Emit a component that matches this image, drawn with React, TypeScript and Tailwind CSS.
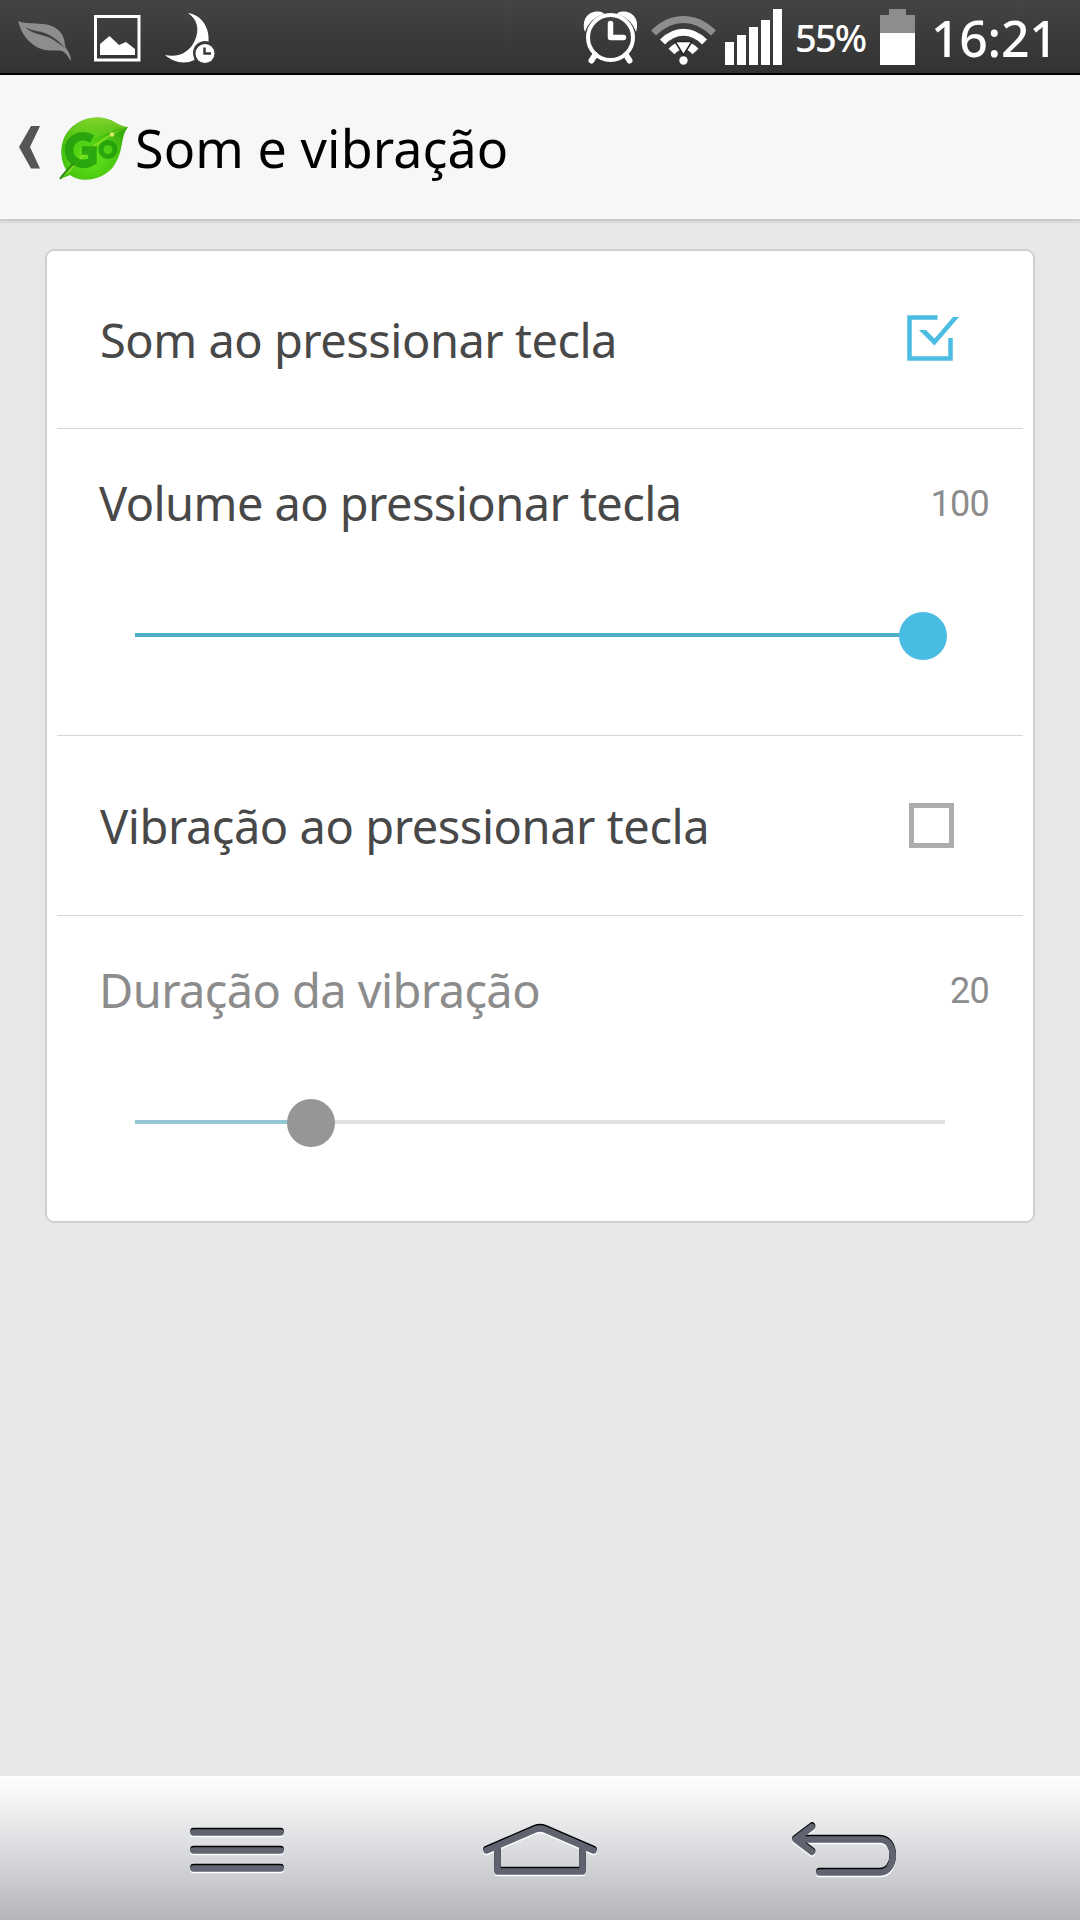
import type { ReactNode } from "react";

interface IRowProps {
  label: string;
  labelClass: string;
  children: ReactNode;
}

interface ISliderRowProps {
  label: string;
  labelClass: string;
  value: string;
  fill: number;
  fillClass: string;
  thumbClass: string;
}

function StatusBar() {
  return (
    <header className="flex h-[75px] w-full items-start border-b-2 border-black bg-linear-to-b from-[#444444] to-[#323232] text-white">
      <svg className="h-[73px] w-[240px] shrink-0" viewBox="0 0 240 73">
        <path
          d="M18 21C28 26 51 19 61 33C66 40 64 45 66 48C69 52 71 56 71 61C69 59 67 53 62 51C54 49 43 54 30 42C22 35 20 27 18 21Z"
          fill="#8d8d8d"
        />
        <path
          d="M25 27C34 32 41 30 51 36C58 40 61 44 65 48C59 44 55 40 48 37C40 34 32 34 25 27Z"
          fill="#3f3f3f"
        />
        <rect x="95.500" y="16.500" width="43.500" height="43.500" fill="none" stroke="#fff" strokeWidth="3" />
        <path d="M100 55V44L109.500 36L119 45L126 42L135 49V55Z" fill="#fff" />
        <path
          d="M188 13C202 15 210 28 208.500 43C202 43 194 49 194.500 60C184 65 173 62 165 55C179 58 190 52 195 40C200 29 197 19 188 13Z"
          fill="#fff"
        />
        <circle cx="205" cy="53" r="12" fill="#3a3a3a" />
        <circle cx="205" cy="53.500" r="9.500" fill="#fff" />
        <path d="M204.500 47.500V53.500H211" fill="none" stroke="#3a3a3a" strokeWidth="2.500" />
      </svg>
      <svg className="ml-[340px] h-[73px] w-[210px] shrink-0" viewBox="580 0 210 73">
        <path d="M585 32C581 20 588 11 598 11.500C602 11.500 604 13 604 14C594 17 588 23 585 32Z" fill="#fff" />
        <path d="M636 32C640 20 633 11 623 11.500C619 11.500 617 13 617 14C627 17 633 23 636 32Z" fill="#fff" />
        <path d="M595 55L591.500 60.500M626 55L629.500 60.500" stroke="#fff" strokeWidth="6" strokeLinecap="round" />
        <circle cx="610.500" cy="37.500" r="22.500" fill="none" stroke="#fff" strokeWidth="4" />
        <path
          d="M610.500 23.500V37.500H623.500"
          fill="none"
          stroke="#fff"
          strokeWidth="5.500"
          strokeLinecap="round"
          strokeLinejoin="round"
        />
        <path d="M653.500 33C672 15 695 15 713.500 33" fill="none" stroke="#8d8d8d" strokeWidth="7" />
        <path d="M662.500 42C675 29 692 29 704.500 42" fill="none" stroke="#fff" strokeWidth="7" />
        <path d="M671.500 51.500C679 43 688 43 695.500 51.500" fill="none" stroke="#fff" strokeWidth="8" />
        <path d="M675 41.500H692L683.500 55Z" fill="#fff" stroke="#222" strokeWidth="1.500" />
        <circle cx="683.500" cy="60.500" r="4.200" fill="#fff" />
        <path d="M725 42h9v23h-9zM737 35h9v30h-9zM749 27h9v38h-9zM761 20h9v45h-9zM773 9h9v56h-9z" fill="#fff" />
      </svg>
      <span className="ml-[5px] mt-[12px] w-[85px] whitespace-nowrap font-['Noto_Sans'] text-[38px] font-medium leading-[50px] tracking-[-1.800px]">
        55%
      </span>
      <svg className="h-[73px] w-[35px] shrink-0" viewBox="880 0 35 73">
        <path d="M880 15h9V9h17v6h9v18h-35z" fill="#8d8d8d" />
        <path d="M880 33h35v32h-35z" fill="#fff" />
      </svg>
      <span className="ml-[16px] mt-[8px] whitespace-nowrap font-['Noto_Sans'] text-[50px] font-medium leading-[60px] tracking-[-0.300px]">
        16:21
      </span>
    </header>
  );
}

function TitleBar() {
  return (
    <div className="relative z-10 flex h-[144px] items-start bg-[#f7f7f7] shadow-[0_1px_4px_1px_rgba(0,0,0,0.18)]">
      <svg className="h-[144px] w-[135px] shrink-0" viewBox="0 75 135 144">
        <defs>
          <radialGradient id="leaf" cx="0.45" cy="0.65" r="0.6">
            <stop offset="0" stopColor="#62e61b" />
            <stop offset="0.6" stopColor="#4cc911" />
            <stop offset="1" stopColor="#39ab0d" />
          </radialGradient>
          <linearGradient id="shine" x1="0" y1="0" x2="0" y2="1">
            <stop offset="0" stopColor="#a5e93a" stopOpacity="0.7" />
            <stop offset="1" stopColor="#7ede20" stopOpacity="0.1" />
          </linearGradient>
        </defs>
        <path d="M31 126H40L30 147L40 168.500H31L19 147Z" fill="#555" />
        <path
          d="M60 179C61 177 64 174 67 171C59 160 59 140 70 129C82 116 103 114 116 123C120 125 124 127 128 127C120 137 124 150 115 164C106 180 81 184 70 175C67 176 63 178 60 179Z"
          fill="url(#leaf)"
        />
        <path d="M63 144C67 124 90 112 110 120C117 123 122 127 128 127C103 132 83 147 63 144Z" fill="url(#shine)" />
        <path d="M60 179C80 155 99 136 128 127C105 137 85 154 70 172Z" fill="#98e525" opacity="0.6" />
        <path
          d="M92 139C82 133 69 138 69 150C69 163 84 167 92.500 161V150.500H82"
          fill="none"
          stroke="#1f9a0c"
          strokeWidth="8.500"
          opacity="0.8"
        />
        <circle cx="108" cy="149.500" r="7" fill="none" stroke="#1f9a0c" strokeWidth="5" opacity="0.8" />
        <path d="M60 179C64 173 69 168 74 163" fill="none" stroke="#2f8f14" strokeWidth="2" />
        <circle cx="112" cy="134.500" r="2.300" fill="#d9e86a" />
      </svg>
      <h1 className="mt-[38px] whitespace-nowrap font-['Noto_Sans'] text-[52px] leading-[70px] tracking-[0.100px] text-black">
        Som e vibração
      </h1>
    </div>
  );
}

function CheckRow({ label, labelClass, children }: IRowProps) {
  return (
    <div className="flex h-full items-start justify-between pl-[53px]">
      <span className={`whitespace-nowrap font-['Noto_Sans'] text-[47px] leading-[64px] ${labelClass}`}>{label}</span>
      {children}
    </div>
  );
}

function SliderRow({ label, labelClass, value, fill, fillClass, thumbClass }: ISliderRowProps) {
  return (
    <div className="h-full pl-[52px] pr-[44px]">
      <div className="flex h-[107px] items-start justify-between">
        <span className={`mt-[42px] whitespace-nowrap font-['Noto_Sans'] text-[47px] leading-[64px] ${labelClass}`}>
          {label}
        </span>
        <span className="mt-[54px] font-['Roboto'] text-[36px] leading-[42px] tracking-[-0.700px] text-[#8c8c8c]">
          {value}
        </span>
      </div>
      <div className="relative ml-[36px] mt-[97px] h-[4px] w-[810px] bg-[#e0e0e0]">
        <div className={`h-full ${fillClass}`} style={{ width: fill }} />
        <div
          className={`absolute top-[-21px] size-[48px] -translate-x-1/2 rounded-full ${thumbClass}`}
          style={{ left: fill }}
        />
      </div>
    </div>
  );
}

function Divider() {
  return <div className="mx-[10px] h-px bg-[#d6d6d6]" />;
}

// Engraved stroke: light lip below, dark edge on top
function NavGlyph({ d }: { d: string }) {
  return (
    <g fill="none" strokeLinecap="round" strokeLinejoin="round">
      <path d={d} stroke="#fff" strokeWidth="6.500" transform="translate(0 2.500)" />
      <path d={d} stroke="#000" strokeWidth="6.500" transform="translate(0 -0.500)" />
      <path d={d} stroke="#606470" strokeWidth="6.500" transform="translate(0 0.900)" />
    </g>
  );
}

function NavBar() {
  return (
    <nav className="flex h-[144px] items-center justify-between bg-linear-to-b from-white via-[#dcdde0] to-[#b4b6bb] px-[180px]">
      <svg className="h-[144px] w-[114px]" viewBox="180 1776 114 144">
        <NavGlyph d="M193.500 1831.500H280.500M193.500 1849.500H280.500M193.500 1867.500H280.500" />
      </svg>
      <svg className="h-[144px] w-[130px]" viewBox="475 1776 130 144">
        <NavGlyph d="M497.500 1850V1870.500H582.500V1850M486.500 1849.500L535 1828.500Q540 1826.500 545 1828.500L593.500 1849.500" />
      </svg>
      <svg className="h-[144px] w-[114px]" viewBox="786 1776 114 144">
        <NavGlyph d="M812 1826L795.500 1838.500L812 1851M800 1838.500H880C897 1838.500 897 1871.500 880 1871.500H819.500" />
      </svg>
    </nav>
  );
}

export default function App() {
  return (
    <main className="flex h-[1920px] w-[1080px] flex-col overflow-hidden bg-[#e8e8e8]">
      <StatusBar />
      <TitleBar />
      <section className="mx-[45px] mt-[30px] h-[974px] rounded-[9px] border-2 border-[#d0d0d0] bg-white">
        <div className="h-[177px]">
          <CheckRow label="Som ao pressionar tecla" labelClass="mt-[57px] tracking-[-0.500px] text-[#484848]">
            <svg className="mr-[70px] mt-[59px] h-[56px] w-[60px]" viewBox="903 310 60 56">
              <path d="M937.500 317.500H909.500V358.500H950.500V338" fill="none" stroke="#4bbce2" strokeWidth="4.500" />
              <path d="M919 330H926L934.500 338.500L953 317H959L934.500 345.500Z" fill="#4bbce2" />
            </svg>
          </CheckRow>
        </div>
        <Divider />
        <div className="h-[306px]">
          <SliderRow
            label="Volume ao pressionar tecla"
            labelClass="tracking-[-0.580px] text-[#484848]"
            value="100"
            fill={788}
            fillClass="bg-[#50aecb]"
            thumbClass="bg-[#49bce4]"
          />
        </div>
        <Divider />
        <div className="h-[179px]">
          <CheckRow label="Vibração ao pressionar tecla" labelClass="mt-[58px] tracking-[-0.450px] text-[#484848]">
            <div className="mr-[79px] mt-[67px] size-[45px] border-[5px] border-[#acacac]" />
          </CheckRow>
        </div>
        <Divider />
        <div className="h-[304px]">
          <SliderRow
            label="Duração da vibração"
            labelClass="tracking-[-0.600px] text-[#8c8c8c]"
            value="20"
            fill={176}
            fillClass="bg-[#93c7d6]"
            thumbClass="bg-[#969696]"
          />
        </div>
      </section>
      <div className="mt-auto">
        <NavBar />
      </div>
    </main>
  );
}
